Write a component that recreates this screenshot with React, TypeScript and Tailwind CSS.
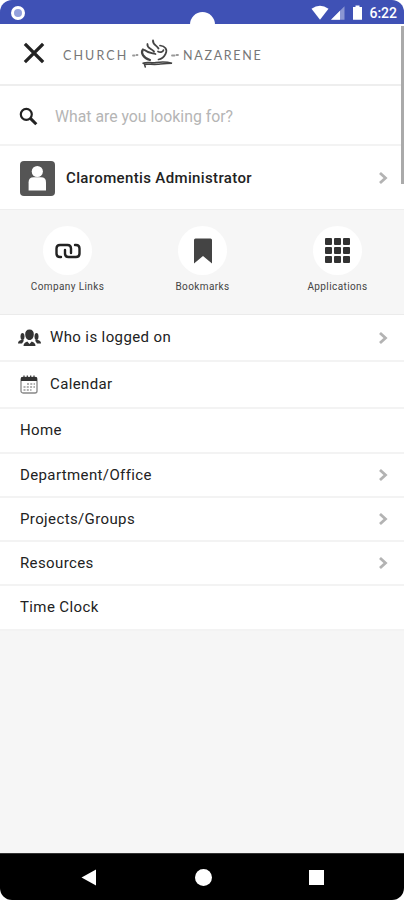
import type { ReactNode } from 'react';
import clsx from 'clsx';

interface MenuItem {
  label: string;
  icon?: ReactNode;
  hasChildren?: boolean;
  height: string;
}

const menuItems: MenuItem[] = [
  { label: 'Who is logged on', icon: <PeopleIcon />, hasChildren: true, height: 'h-[47px]' },
  { label: 'Calendar', icon: <CalendarIcon />, height: 'h-[47px]' },
  { label: 'Home', height: 'h-[45px]' },
  { label: 'Department/Office', hasChildren: true, height: 'h-[44px]' },
  { label: 'Projects/Groups', hasChildren: true, height: 'h-[44px]' },
  { label: 'Resources', hasChildren: true, height: 'h-[44px]' },
  { label: 'Time Clock', height: 'h-[45px]' },
];

const shortcuts = [
  { label: 'Company Links', icon: <LinkIcon /> },
  { label: 'Bookmarks', icon: <BookmarkIcon /> },
  { label: 'Applications', icon: <GridIcon /> },
];

export default function App() {
  return (
    <div className="relative flex h-[900px] w-[404px] flex-col overflow-hidden bg-white font-['Roboto','Liberation_Sans',sans-serif] text-[#222]">
      <StatusBar />

      {/* Logo bar */}
      <header className="flex h-[62px] shrink-0 items-center border-b-2 border-[#eeeeee] pl-[23px]">
        <svg className="mt-[-3px] h-[22px] w-[22px] shrink-0" viewBox="0 0 22 22" fill="none">
          <path d="m3 3 16 16M19 3 3 19" stroke="#222" strokeWidth="3.2" strokeLinecap="square" />
        </svg>
        <Logo />
      </header>

      {/* Search */}
      <div className="flex h-[60px] shrink-0 items-center border-b-2 border-[#f3f3f3] pt-[3px] pl-[19px]">
        <svg className="h-[20px] w-[20px] shrink-0" viewBox="0 0 20 20" fill="none" stroke="#222">
          <circle cx="7.3" cy="7.3" r="5.5" strokeWidth="2.2" />
          <path d="m11.4 11.4 5.9 5.9" strokeWidth="3" />
        </svg>
        <span className="ml-[16px] text-[15.8px] text-[#b5b5b5]">What are you looking for?</span>
      </div>

      {/* Current user */}
      <div className="flex h-[64px] shrink-0 items-center border-b border-[#eeeeee] pt-[1px] pr-[15px] pl-[20px]">
        <svg className="h-[35px] w-[35px] shrink-0" viewBox="0 0 35 35">
          <rect width="35" height="35" rx="4" fill="#555" />
          <circle cx="17.3" cy="10.5" r="5.6" fill="#fff" />
          <path d="M8.6 29.5v-8.2q0-5 5-5h7.4q5 0 5 5v8.2z" fill="#fff" />
        </svg>
        <span className="ml-[11px] flex-1 pt-[1px] text-[15px] font-medium tracking-[0.36px]">
          Claromentis Administrator
        </span>
        <Chevron />
      </div>

      {/* Shortcuts */}
      <div className="flex h-[105px] shrink-0 border-b border-[#ebebeb] bg-[#f6f6f6] pt-[16px]">
        {shortcuts.map(({ label, icon }) => (
          <div key={label} className="flex w-[135px] shrink-0 flex-col items-center">
            <div className="flex h-[49px] w-[49px] items-center justify-center rounded-full bg-white">
              {icon}
            </div>
            <span className="mt-[6px] text-[10px] leading-[12px] tracking-[0.4px] text-[#444]">{label}</span>
          </div>
        ))}
      </div>

      {/* Menu */}
      <nav>
        {menuItems.map(({ label, icon, hasChildren, height }) => (
          <div
            key={label}
            className={clsx('flex items-center border-b-2 border-[#f3f3f3] pr-[15px]', height, icon ? 'pl-[18px]' : 'pl-[20px]')}
          >
            {icon}
            <span className={clsx('flex-1 text-[15px] tracking-[0.38px]', icon && 'ml-[9px]')}>{label}</span>
            {hasChildren && <Chevron />}
          </div>
        ))}
      </nav>

      <div className="flex-1 bg-[#f6f6f6]" />

      <NavigationBar />

      {/* Scroll thumb */}
      <div className="absolute top-[26px] right-0 h-[158px] w-[3px] bg-[#aaa]" />
    </div>
  );
}

function StatusBar() {
  return (
    <div className="relative flex h-[24px] shrink-0 items-center justify-between rounded-t-[12px] bg-[#3f51b5] pt-[1px] pr-[7px] pl-[11px]">
      <div className="h-[14px] w-[14px] rounded-full border-[3px] border-white bg-[#93a0dc]" />
      <div className="flex items-center">
        <svg className="h-[16px] w-[52px]" viewBox="0 0 52 16" fill="#fff">
          <path d="M.5 3.8Q9 -2.4 17.5 3.8L9 14.8Z" />
          <path d="M20 14.8 33.5 1.3v13.5z" opacity=".4" />
          <path d="M20 14.8 29 5.8v9z" />
          <path d="M42 2h2.5V.5h4V2H51v12.800h-9z" />
        </svg>
        <span className="ml-[6px] text-[14px] leading-[24px] font-medium text-white">6:22</span>
      </div>
      {/* Camera cutout */}
      <div className="absolute top-[12px] left-[190px] h-[25px] w-[25px] rounded-full bg-white" />
    </div>
  );
}

function Logo() {
  return (
    <div className="ml-[18px] flex items-center pt-[5px] text-[#777]">
      <span className="w-[66px] font-['Lato','Roboto',sans-serif] text-[12.5px] tracking-[2.1px]">CHURCH</span>
      <svg className="mt-[-7px] h-[32px] w-[52px]" viewBox="0 0 52 32" fill="none" stroke="#444" strokeLinecap="round">
        <path d="M4 18.500h1.500M7.500 18h1M43 18.500h2.500M47.500 18h1.500" stroke="#999" strokeWidth="1.800" />
        <path d="M14 12.500c-2.500 3 0 8.500 7 10.500" strokeWidth="2.200" />
        <path d="M15.500 13c3.500 3 7.500 3 11 4M18.500 7c-1 4 3 4 6.500 7.500M24 3.500c-.5 4 4 5 5.500 8" strokeWidth="1.800" />
        <path d="M31 8.500c5 .5 8 4 5.500 8.500-1.500 3-4 5-7 5.500M29 14.500c1.500 1 5 1 5.500-1.500" strokeWidth="1.700" />
        <path d="M14 26.300c5-2.300 8 .3 13-.8 5-.8 11-.8 16 .8-5 0-9 .5-14 1s-11-.5-13.500.2l.8 2.500" strokeWidth="1.500" />
      </svg>
      <span className="ml-[2px] font-['Lato','Roboto',sans-serif] text-[12.5px] tracking-[1.7px]">NAZARENE</span>
    </div>
  );
}

function Chevron() {
  return (
    <svg className="h-[14px] w-[11px] shrink-0" viewBox="0 0 11 14" fill="none">
      <path d="m2 2 5.500 5L2 12" stroke="#b3b3b3" strokeWidth="2.800" />
    </svg>
  );
}

function LinkIcon() {
  return (
    <svg className="h-[16px] w-[26px]" viewBox="0 0 26 16" fill="none" stroke="#222" strokeWidth="2.4" strokeLinecap="round" strokeLinejoin="round">
      <path d="M6 14H5q-3.500 0-3.500-3.500v-5Q1.500 2 5 2h7.500q3.500 0 3.500 3.500V10" />
      <path d="M20 2h1q3.500 0 3.500 3.500v5q0 3.500-3.500 3.500h-7.500q-3.500 0-3.500-3.500V7" />
    </svg>
  );
}

function BookmarkIcon() {
  return (
    <svg className="h-[26px] w-[18px]" viewBox="0 0 18 26">
      <path d="M0 2q0-1.500 1.500-1.500h15Q18 .5 18 2v23.500l-9-7.500-9 7.500z" fill="#444" />
    </svg>
  );
}

function GridIcon() {
  return (
    <div className="grid grid-cols-3 gap-[2.5px]">
      {Array.from({ length: 9 }, (_, i) => (
        <div key={i} className="h-[6.5px] w-[6.5px] rounded-[1px] bg-[#333]" />
      ))}
    </div>
  );
}

function PeopleIcon() {
  return (
    <svg className="h-[18px] w-[23px] shrink-0" viewBox="0 0 23 18" fill="#333">
      <ellipse cx="4.5" cy="7.5" rx="2" ry="3.5" />
      <ellipse cx="18.5" cy="7.5" rx="2" ry="3.5" />
      <path d="M0 14.500q0-3 4-3.700l2 .7-2 3zM23 14.500q0-3-4-3.700l-2 .7 2 3z" />
      <path d="M11.500.5c3 0 4.500 2 4.300 5-.2 3-1.500 5.500-4.300 5.500S7.400 8.500 7.200 5.500c-.2-3 1.300-5 4.300-5z" />
      <path d="M5.500 17q0-3.500 3.800-4.600L11.500 15l2.200-2.600q3.800 1.100 3.800 4.600z" />
    </svg>
  );
}

function CalendarIcon() {
  return (
    <svg className="mr-[3px] ml-[2px] h-[19px] w-[18px] shrink-0" viewBox="0 0 18 19" fill="none">
      <rect x="1" y="2.5" width="16" height="15.500" rx="2" stroke="#888" strokeWidth="1.3" />
      <path d="M1 6V3q0-1 1-1h14q1 0 1 1v3z" fill="#333" />
      <path d="M4 .5v2.500M7.300.5v2.500M10.700.5v2.500M14 .5v2.500" stroke="#333" strokeWidth="1.2" />
      <path d="M7 9h8M3.500 12h11.500M3.500 15h8" stroke="#999" strokeWidth="1.500" strokeDasharray="2 1.300" />
    </svg>
  );
}

function NavigationBar() {
  return (
    <div className="h-[47px] shrink-0 bg-white">
      <div className="flex h-full items-center justify-between rounded-b-[12px] border-t border-[#333] bg-black pr-[80px] pl-[81px]">
        <svg className="h-[17px] w-[16px]" viewBox="0 0 16 17" fill="#fff">
          <path d="M.5 8.500 15 .5v16z" />
        </svg>
        <div className="h-[17px] w-[17px] rounded-full bg-white" />
        <div className="h-[15px] w-[15px] bg-white" />
      </div>
    </div>
  );
}
